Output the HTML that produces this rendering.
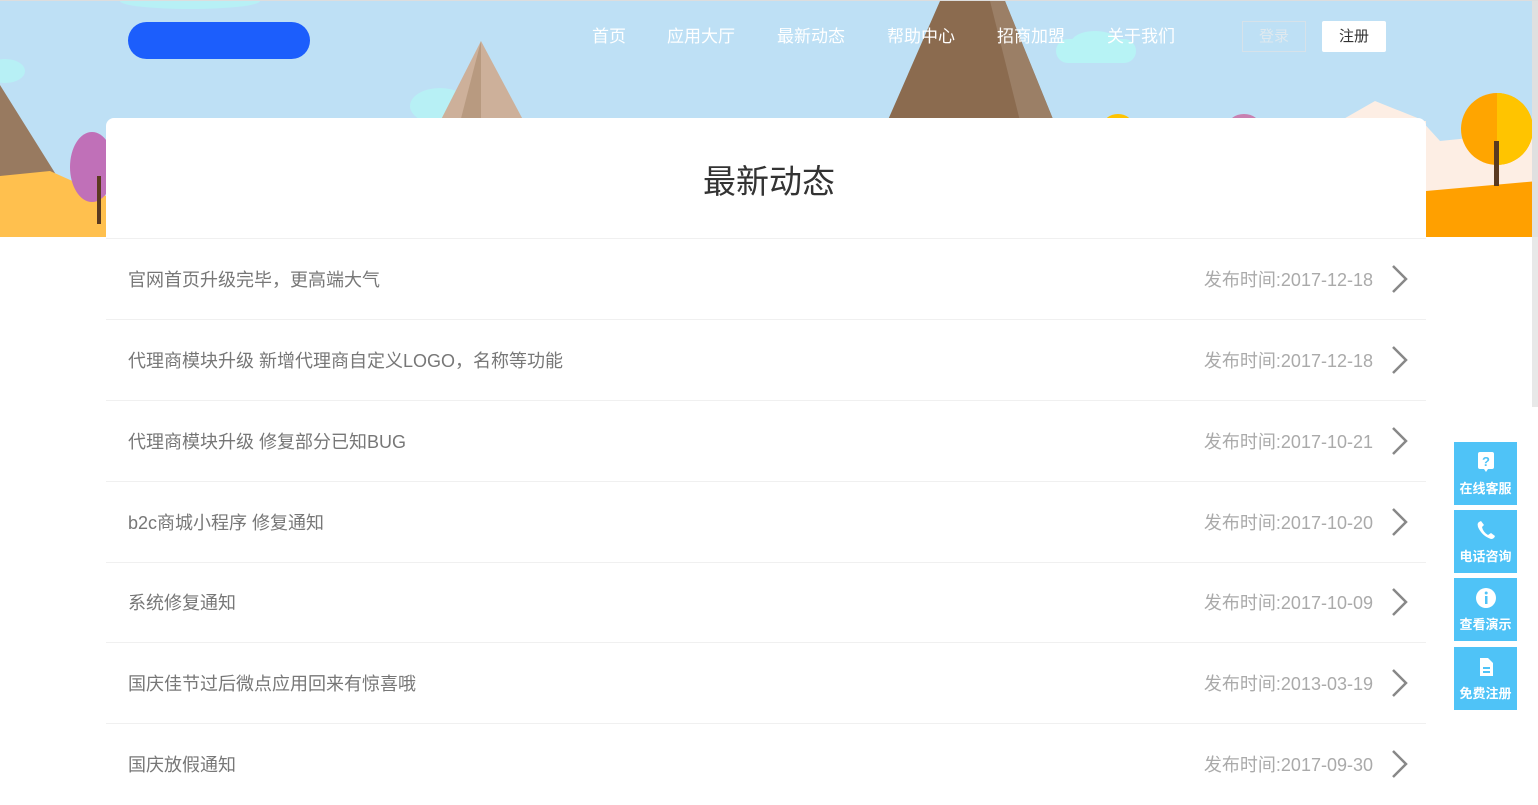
<!DOCTYPE html>
<html><head><meta charset="utf-8"><style>
*{margin:0;padding:0;box-sizing:border-box}
body{width:1538px;height:781px;overflow:hidden;background:#fff;font-family:"Liberation Sans","Noto Sans CJK SC",sans-serif;position:relative}
.banner{position:absolute;left:0;top:0;width:1538px;height:237px;background:#bee0f5;overflow:hidden;border-top:1px solid #ddd}
.nav a{position:absolute;top:21px;color:#fff;font-size:17px;text-decoration:none}
.card{position:absolute;left:106px;top:118px;width:1320px;height:120px;background:#fff;border-radius:8px 8px 0 0}
.title{position:absolute;left:0;width:1538px;top:155px;text-align:center;font-size:33px;color:#333}
.row{position:absolute;left:106px;width:1320px;height:81px;border-bottom:1px solid #f0f0f0}
.row .t{position:absolute;left:22px;top:27px;font-size:18px;color:#777}
.row .d{position:absolute;right:53px;top:27px;font-size:18px;color:#aaa}
.row svg{position:absolute;left:1284px;top:25px}
.sb{position:absolute;left:1454px;width:63px;height:63px;background:#4fc3f7;color:#fff;font-size:13px;font-weight:bold;text-align:center}
.sb span{position:absolute;left:0;width:63px;top:36px}
.sb svg{position:absolute;left:21px;top:9px}
</style></head><body>
<div class="banner">
<svg width="1538" height="237" style="position:absolute;left:0;top:0">
<ellipse cx="190" cy="0" rx="70" ry="8" fill="#b7f0f5"/>
<ellipse cx="5" cy="70" rx="20" ry="12" fill="#b7f0f5"/>
<polygon points="0,84 0,237 100,237 60,180" fill="#987a60"/>
<polygon points="0,175 0,237 106,237 106,195 50,170" fill="#ffc04e"/>
<ellipse cx="92" cy="166" rx="22" ry="35" fill="#c070b8"/>
<rect x="97" y="175" width="4" height="48" fill="#5a3a20"/>
<ellipse cx="440" cy="105" rx="30" ry="18" fill="#b7f0f5"/>
<polygon points="481,40 420,160 545,160" fill="#cdb09a"/>
<polygon points="481,40 450,160 481,160" fill="#b89a80"/>
<polygon points="940,0 870,160 1070,160 1005,0" fill="#8b6b4f"/>
<polygon points="990,0 1005,0 1070,160 1030,160" fill="#9b7f66"/>
<rect x="1056" y="38" width="80" height="24" rx="12" fill="#b7f3f5"/>
<ellipse cx="1095" cy="42" rx="24" ry="12" fill="#b7f3f5"/>
<ellipse cx="1118" cy="125" rx="15" ry="12" fill="#ffc300"/>
<ellipse cx="1244" cy="125" rx="16" ry="12" fill="#c880b0"/>
<polygon points="1340,120 1375,100 1420,118 1440,140 1538,130 1538,237 1426,237 1426,120" fill="#fdeee4"/>
<polygon points="1426,190 1538,180 1538,237 1426,237" fill="#ffa000"/>
<circle cx="1497" cy="128" r="36" fill="#ffa500"/>
<path d="M1497 92 A36 36 0 0 1 1497 164Z" fill="#ffc400"/>
<rect x="1494" y="140" width="5" height="45" fill="#5a3a20"/>
<rect x="1532" y="0" width="6" height="237" fill="#e0e0e0"/>
</svg>
<div style="position:absolute;left:128px;top:21px;width:182px;height:37px;border-radius:19px;background:#1c5efc"></div>
<div class="nav"><a style="left:592px">首页</a><a style="left:667px">应用大厅</a><a style="left:777px">最新动态</a><a style="left:887px">帮助中心</a><a style="left:997px">招商加盟</a><a style="left:1107px">关于我们</a></div>
<div style="position:absolute;left:1242px;top:20px;width:64px;height:31px;border:1px solid #d6e2ea;color:#dfe9ef;font-size:15px;text-align:center;line-height:29px">登录</div>
<div style="position:absolute;left:1322px;top:20px;width:64px;height:31px;background:#fff;color:#333;font-size:15px;text-align:center;line-height:31px;border-radius:2px">注册</div>
</div>
<div style="position:absolute;left:1532px;top:237px;width:6px;height:170px;background:#e8e8e8"></div>
<div class="card"></div>
<div class="title">最新动态</div>
<div style="position:absolute;left:106px;top:238px;width:1320px;border-top:1px solid #f0f0f0"></div>
<div class="row" style="top:239px"><div class="t">官网首页升级完毕，更高端大气</div><div class="d">发布时间:2017-12-18</div><svg width="20" height="30"><path d="M3 2 L16 15 L3 28" stroke="#888" stroke-width="2.5" fill="none"/></svg></div>
<div class="row" style="top:320px"><div class="t">代理商模块升级 新增代理商自定义LOGO，名称等功能</div><div class="d">发布时间:2017-12-18</div><svg width="20" height="30"><path d="M3 2 L16 15 L3 28" stroke="#888" stroke-width="2.5" fill="none"/></svg></div>
<div class="row" style="top:401px"><div class="t">代理商模块升级 修复部分已知BUG</div><div class="d">发布时间:2017-10-21</div><svg width="20" height="30"><path d="M3 2 L16 15 L3 28" stroke="#888" stroke-width="2.5" fill="none"/></svg></div>
<div class="row" style="top:482px"><div class="t">b2c商城小程序 修复通知</div><div class="d">发布时间:2017-10-20</div><svg width="20" height="30"><path d="M3 2 L16 15 L3 28" stroke="#888" stroke-width="2.5" fill="none"/></svg></div>
<div class="row" style="top:562px"><div class="t">系统修复通知</div><div class="d">发布时间:2017-10-09</div><svg width="20" height="30"><path d="M3 2 L16 15 L3 28" stroke="#888" stroke-width="2.5" fill="none"/></svg></div>
<div class="row" style="top:643px"><div class="t">国庆佳节过后微点应用回来有惊喜哦</div><div class="d">发布时间:2013-03-19</div><svg width="20" height="30"><path d="M3 2 L16 15 L3 28" stroke="#888" stroke-width="2.5" fill="none"/></svg></div>
<div class="row" style="top:724px;border:none"><div class="t">国庆放假通知</div><div class="d">发布时间:2017-09-30</div><svg width="20" height="30"><path d="M3 2 L16 15 L3 28" stroke="#888" stroke-width="2.5" fill="none"/></svg></div>
<div class="sb" style="top:442px"><svg width="22" height="22"><rect x="3" y="1" width="16" height="17" rx="2" fill="#fff"/><path d="M9 18 L11 21 L13 18Z" fill="#fff"/><text x="11" y="15" font-size="13" font-weight="bold" fill="#4fc3f7" text-anchor="middle" font-family="Liberation Sans">?</text></svg><span>在线客服</span></div>
<div class="sb" style="top:510px"><svg width="22" height="22"><path d="M4 3 Q2 4 3 8 Q7 17 16 20 Q19 20 20 17 L16 14 L13 16 Q8 13 7 8 L9 6 L6 2Z" fill="#fff"/></svg><span>电话咨询</span></div>
<div class="sb" style="top:578px"><svg width="22" height="22"><circle cx="11" cy="11" r="10" fill="#fff"/><rect x="10" y="9" width="2.5" height="8" fill="#4fc3f7"/><circle cx="11.2" cy="6" r="1.5" fill="#4fc3f7"/></svg><span>查看演示</span></div>
<div class="sb" style="top:647px"><svg width="22" height="22"><path d="M5 2 L13 2 L18 7 L18 20 L5 20Z" fill="#fff"/><rect x="8" y="11" width="7" height="2" fill="#4fc3f7"/><rect x="8" y="15" width="7" height="2" fill="#4fc3f7"/></svg><span>免费注册</span></div>
</body></html>
